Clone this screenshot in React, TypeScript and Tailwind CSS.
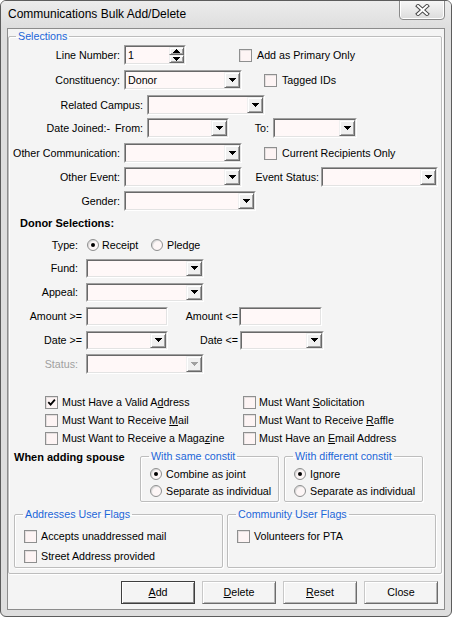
import React from "react";

const sunkenOuter =
  "border border-t-[#a0a0a0] border-l-[#a0a0a0] border-b-[#ffffff] border-r-[#ffffff]";
const sunkenInner =
  "border border-t-[#696969] border-l-[#696969] border-b-[#e3e3e3] border-r-[#e3e3e3] bg-[#fff8f8]";

function DownArrow({ color = "#000" }: { color?: string }) {
  return (
    <svg width="7" height="4" viewBox="0 0 7 4" shapeRendering="crispEdges">
      <rect x="0" y="0" width="7" height="1" fill={color} />
      <rect x="1" y="1" width="5" height="1" fill={color} />
      <rect x="2" y="2" width="3" height="1" fill={color} />
      <rect x="3" y="3" width="1" height="1" fill={color} />
    </svg>
  );
}

function UpArrow({ color = "#000" }: { color?: string }) {
  return (
    <svg width="7" height="4" viewBox="0 0 7 4" shapeRendering="crispEdges">
      <rect x="3" y="0" width="1" height="1" fill={color} />
      <rect x="2" y="1" width="3" height="1" fill={color} />
      <rect x="1" y="2" width="5" height="1" fill={color} />
      <rect x="0" y="3" width="7" height="1" fill={color} />
    </svg>
  );
}

const raised =
  "bg-[#f0f0f0] border border-t-[#f0f0f0] border-l-[#f0f0f0] border-b-[#696969] border-r-[#696969] shadow-[inset_1px_1px_0_#ffffff,inset_-1px_-1px_0_#a0a0a0]";

function Combo({ cls, value, disabled }: { cls: string; value?: string; disabled?: boolean }) {
  return (
    <div className={`${cls} shrink-0 flex ${sunkenOuter}`}>
      <div className={`flex flex-1 min-w-0 ${sunkenInner}`}>
        <div className="flex-1 flex items-center pl-[2px] text-black">{value}</div>
        <div className={`w-[16px] h-full flex items-center justify-center ${raised}`}>
          <DownArrow color={disabled ? "#a0a0a0" : "#000"} />
        </div>
      </div>
    </div>
  );
}

function TextBox({ cls }: { cls: string }) {
  return (
    <div className={`${cls} shrink-0 flex ${sunkenOuter}`}>
      <div className={`flex-1 ${sunkenInner}`} />
    </div>
  );
}

function Spinner() {
  return (
    <div className={`w-[62px] h-[20px] shrink-0 flex ${sunkenOuter}`}>
      <div className={`flex flex-1 min-w-0 ${sunkenInner}`}>
        <div className="flex-1 flex items-center pl-[2px] text-black">1</div>
        <div className="w-[15px] flex flex-col">
          <div className={`flex-1 flex items-center justify-center ${raised}`}>
            <UpArrow />
          </div>
          <div className={`flex-1 flex items-center justify-center ${raised}`}>
            <DownArrow />
          </div>
        </div>
      </div>
    </div>
  );
}

function Check({ checked }: { checked?: boolean }) {
  return (
    <div className="w-[13px] h-[13px] shrink-0 border border-[#8e8f8f] bg-[#fdf4f4] shadow-[inset_1px_1px_0_#e4dede] flex items-center justify-center">
      {checked && (
        <svg width="9" height="9" viewBox="0 0 9 9">
          <path d="M1.3 4.2 L3.6 6.6 L7.9 1.6" fill="none" stroke="#000" strokeWidth="1.8" />
        </svg>
      )}
    </div>
  );
}

function Radio({ on }: { on?: boolean }) {
  return (
    <div className="w-[12px] h-[12px] shrink-0 rounded-full border border-[#8e8f8f] bg-[#fdf6f6] shadow-[inset_1px_1px_1px_#d8d8d8] flex items-center justify-center">
      {on && <div className="w-[4px] h-[4px] rounded-full bg-black" />}
    </div>
  );
}

function Lbl({ cls, children, gray }: { cls: string; children: React.ReactNode; gray?: boolean }) {
  return (
    <div className={`${cls} shrink-0 text-right whitespace-nowrap ${gray ? "text-[#a0a0a0]" : "text-black"}`}>
      {children}
    </div>
  );
}

const groupCls =
  "border border-[#bdbdbd] rounded-[2px] shadow-[inset_1px_1px_0_#ffffff,1px_1px_0_#ffffff]";
const legendCls = "px-[2px] leading-[13px] text-[#1c66d8] whitespace-nowrap";

function Btn({ children, def }: { children: React.ReactNode; def?: boolean }) {
  return (
    <div
      className={`w-[74px] h-[23px] flex items-center justify-center text-black bg-[#f4f4f4] ${
        def
          ? "border border-[#3f3f3f] shadow-[inset_1px_1px_0_#ffffff,inset_-1px_-1px_0_#8a8a8a]"
          : "border border-t-[#c8c8c8] border-l-[#c8c8c8] border-b-[#6c6c6c] border-r-[#6c6c6c] shadow-[inset_1px_1px_0_#ffffff,inset_-1px_-1px_0_#b4b4b4]"
      }`}
    >
      {children}
    </div>
  );
}

export default function App() {
  return (
    <div className="w-[452px] h-[617px] font-['Liberation_Sans',Arial,sans-serif] text-[10.7px] leading-[13px] text-black">
      <div className="w-[452px] h-[617px] flex flex-col border border-[#5c5c5c] rounded-[6px] bg-[#dedede] overflow-hidden">
        {/* title bar */}
        <div className="h-[27px] shrink-0 flex justify-between bg-gradient-to-b from-[#ececec] to-[#dedede]">
          <div className="self-center pl-[7px] text-[12px] leading-[15px] text-black">
            Communications Bulk Add/Delete
          </div>
          <div className="self-start -mt-[1px] mr-[6px] w-[46px] h-[20px] rounded-b-[4px] border border-[#8a8a8a] bg-gradient-to-b from-[#f6f6f6] to-[#dcdcdc] shadow-[inset_1px_0_0_#ffffff,inset_-1px_-1px_0_#ffffff] flex items-center justify-center">
            <svg width="15" height="12" viewBox="0 0 15 12">
              <path d="M3 2 L12 10 M12 2 L3 10" stroke="#4a4a4a" strokeWidth="4" strokeLinecap="square" />
              <path d="M3 2 L12 10 M12 2 L3 10" stroke="#ffffff" strokeWidth="2" strokeLinecap="square" />
            </svg>
          </div>
        </div>

        {/* client */}
        <div className="ml-[6px] w-[438px] h-[582px] shrink-0 border border-[#8c8c8c] bg-[#f4f4f4] flex flex-col">
          <fieldset className={`mt-[1px] w-[434px] ${groupCls}`}>
            <legend className={`ml-[7px] ${legendCls}`}>Selections</legend>
            <div className="h-[530px] flex flex-col">
              {/* Row 1 */}
              <div className="mt-[2px] h-[20px] flex items-center">
                <Lbl cls="w-[111px]">Line Number:</Lbl>
                <div className="ml-[4px]">
                  <Spinner />
                </div>
                <div className="ml-[53px]">
                  <Check />
                </div>
                <div className="ml-[5px]">Add as Primary Only</div>
              </div>
              {/* Row 2 */}
              <div className="mt-[5px] h-[20px] flex items-center">
                <Lbl cls="w-[111px]">Constituency:</Lbl>
                <div className="ml-[4px] flex">
                  <Combo cls="w-[118px] h-[20px]" value="Donor" />
                </div>
                <div className="ml-[22px]">
                  <Check />
                </div>
                <div className="ml-[5px]">Tagged IDs</div>
              </div>
              {/* Row 3 */}
              <div className="mt-[5px] h-[20px] flex items-center">
                <Lbl cls="w-[134px]">Related Campus:</Lbl>
                <div className="ml-[4px] flex">
                  <Combo cls="w-[118px] h-[20px]" />
                </div>
              </div>
              {/* Row 4 */}
              <div className="mt-[3px] h-[20px] flex items-center">
                <Lbl cls="w-[134px]">
                  Date Joined:-<span className="ml-[5px]">From:</span>
                </Lbl>
                <div className="ml-[4px] flex">
                  <Combo cls="w-[82px] h-[20px]" />
                </div>
                <Lbl cls="w-[40px]">To:</Lbl>
                <div className="ml-[4px] flex">
                  <Combo cls="w-[84px] h-[20px]" />
                </div>
              </div>
              {/* Row 5 */}
              <div className="mt-[5px] h-[20px] flex items-center">
                <Lbl cls="w-[111px]">Other Communication:</Lbl>
                <div className="ml-[4px] flex">
                  <Combo cls="w-[118px] h-[20px]" />
                </div>
                <div className="ml-[22px]">
                  <Check />
                </div>
                <div className="ml-[5px]">Current Recipients Only</div>
              </div>
              {/* Row 6 */}
              <div className="mt-[4px] h-[20px] flex items-center">
                <Lbl cls="w-[111px]">Other Event:</Lbl>
                <div className="ml-[4px] flex">
                  <Combo cls="w-[118px] h-[20px]" />
                </div>
                <Lbl cls="w-[77px]">Event Status:</Lbl>
                <div className="ml-[2px] flex">
                  <Combo cls="w-[117px] h-[20px]" />
                </div>
              </div>
              {/* Row 7 */}
              <div className="mt-[4px] h-[20px] flex items-center">
                <Lbl cls="w-[111px]">Gender:</Lbl>
                <div className="ml-[4px] flex">
                  <Combo cls="w-[132px] h-[20px]" />
                </div>
              </div>

              {/* Donor selections */}
              <div className="mt-[6px] h-[13px] pl-[11px] font-bold text-[11px] leading-[13px]">
                Donor Selections:
              </div>
              <div className="mt-[5px] h-[20px] flex items-center">
                <Lbl cls="w-[69px]">Type:</Lbl>
                <div className="ml-[9px] w-[64px] flex items-center">
                  <Radio on />
                  <span className="ml-[3px]">Receipt</span>
                </div>
                <div className="flex items-center">
                  <Radio />
                  <span className="ml-[4px]">Pledge</span>
                </div>
              </div>
              <div className="mt-[3px] h-[20px] flex items-center">
                <Lbl cls="w-[69px]">Fund:</Lbl>
                <div className="ml-[8px] flex">
                  <Combo cls="w-[118px] h-[19px]" />
                </div>
              </div>
              <div className="mt-[4px] h-[20px] flex items-center">
                <Lbl cls="w-[69px]">Appeal:</Lbl>
                <div className="ml-[8px] flex">
                  <Combo cls="w-[118px] h-[19px]" />
                </div>
              </div>
              <div className="mt-[4px] h-[20px] flex items-center">
                <Lbl cls="w-[73px]">Amount &gt;=</Lbl>
                <div className="ml-[4px] flex">
                  <TextBox cls="w-[82px] h-[19px]" />
                </div>
                <Lbl cls="w-[70px]">Amount &lt;=</Lbl>
                <div className="ml-[1px] flex">
                  <TextBox cls="w-[83px] h-[19px]" />
                </div>
              </div>
              <div className="mt-[4px] h-[20px] flex items-center">
                <Lbl cls="w-[73px]">Date &gt;=</Lbl>
                <div className="ml-[4px] flex">
                  <Combo cls="w-[82px] h-[19px]" />
                </div>
                <Lbl cls="w-[70px]">Date &lt;=</Lbl>
                <div className="ml-[2px] flex">
                  <Combo cls="w-[84px] h-[19px]" />
                </div>
              </div>
              <div className="mt-[4px] h-[20px] flex items-center">
                <Lbl cls="w-[69px]" gray>
                  Status:
                </Lbl>
                <div className="ml-[8px] flex">
                  <Combo cls="w-[118px] h-[20px]" disabled />
                </div>
              </div>

              {/* checkbox grid */}
              <div className="mt-[20px] h-[16px] flex items-center ml-[36px]">
                <div className="w-[198px] flex items-center">
                  <Check checked />
                  <span className="ml-[4px]">
                    Must Have a Valid A<span className="underline">d</span>dress
                  </span>
                </div>
                <div className="flex items-center">
                  <Check />
                  <span className="ml-[3px]">
                    Must Want <span className="underline">S</span>olicitation
                  </span>
                </div>
              </div>
              <div className="mt-[2px] h-[16px] flex items-center ml-[36px]">
                <div className="w-[198px] flex items-center">
                  <Check />
                  <span className="ml-[4px]">
                    Must Want to Receive <span className="underline">M</span>ail
                  </span>
                </div>
                <div className="flex items-center">
                  <Check />
                  <span className="ml-[3px]">
                    Must Want to Receive <span className="underline">R</span>affle
                  </span>
                </div>
              </div>
              <div className="mt-[2px] h-[16px] flex items-center ml-[36px]">
                <div className="w-[198px] flex items-center">
                  <Check />
                  <span className="ml-[4px]">
                    Must Want to Receive a Maga<span className="underline">z</span>ine
                  </span>
                </div>
                <div className="flex items-center">
                  <Check />
                  <span className="ml-[3px]">
                    Must Have an <span className="underline">E</span>mail Address
                  </span>
                </div>
              </div>

              {/* spouse */}
              <div className="mt-[4px] flex items-start">
                <div className="w-[131px] pl-[5px] pt-[1px] font-bold text-[11px] leading-[13px] whitespace-nowrap">
                  When adding spouse
                </div>
                <fieldset className={`w-[139px] ${groupCls}`}>
                  <legend className={`ml-[8px] ${legendCls}`}>With same constit</legend>
                  <div className="h-[38px] flex flex-col pl-[9px]">
                    <div className="mt-[4px] h-[14px] flex items-center">
                      <Radio on />
                      <span className="ml-[4px]">Combine as joint</span>
                    </div>
                    <div className="mt-[3px] h-[14px] flex items-center">
                      <Radio />
                      <span className="ml-[4px]">Separate as individual</span>
                    </div>
                  </div>
                </fieldset>
                <fieldset className={`ml-[5px] w-[139px] ${groupCls}`}>
                  <legend className={`ml-[8px] ${legendCls}`}>With different constit</legend>
                  <div className="h-[38px] flex flex-col pl-[9px]">
                    <div className="mt-[4px] h-[14px] flex items-center">
                      <Radio on />
                      <span className="ml-[4px]">Ignore</span>
                    </div>
                    <div className="mt-[3px] h-[14px] flex items-center">
                      <Radio />
                      <span className="ml-[4px]">Separate as individual</span>
                    </div>
                  </div>
                </fieldset>
              </div>

              {/* user flags */}
              <div className="mt-[6px] ml-[5px] flex items-start">
                <fieldset className={`w-[209px] ${groupCls}`}>
                  <legend className={`ml-[8px] ${legendCls}`}>Addresses User Flags</legend>
                  <div className="h-[46px] flex flex-col pl-[9px]">
                    <div className="mt-[8px] h-[14px] flex items-center">
                      <Check />
                      <span className="ml-[4px]">Accepts unaddressed mail</span>
                    </div>
                    <div className="mt-[6px] h-[14px] flex items-center">
                      <Check />
                      <span className="ml-[4px]">Street Address provided</span>
                    </div>
                  </div>
                </fieldset>
                <fieldset className={`ml-[4px] w-[209px] ${groupCls}`}>
                  <legend className={`ml-[8px] ${legendCls}`}>Community User Flags</legend>
                  <div className="h-[46px] flex flex-col pl-[9px]">
                    <div className="mt-[8px] h-[14px] flex items-center">
                      <Check />
                      <span className="ml-[4px]">Volunteers for PTA</span>
                    </div>
                  </div>
                </fieldset>
              </div>
            </div>
          </fieldset>

          {/* buttons */}
          <div className="mt-[7px] flex justify-end gap-[7px] pr-[6px]">
            <Btn def>
              <span className="underline">A</span>dd
            </Btn>
            <Btn>
              <span className="underline">D</span>elete
            </Btn>
            <Btn>
              <span className="underline">R</span>eset
            </Btn>
            <Btn>Close</Btn>
          </div>
        </div>
      </div>
    </div>
  );
}
